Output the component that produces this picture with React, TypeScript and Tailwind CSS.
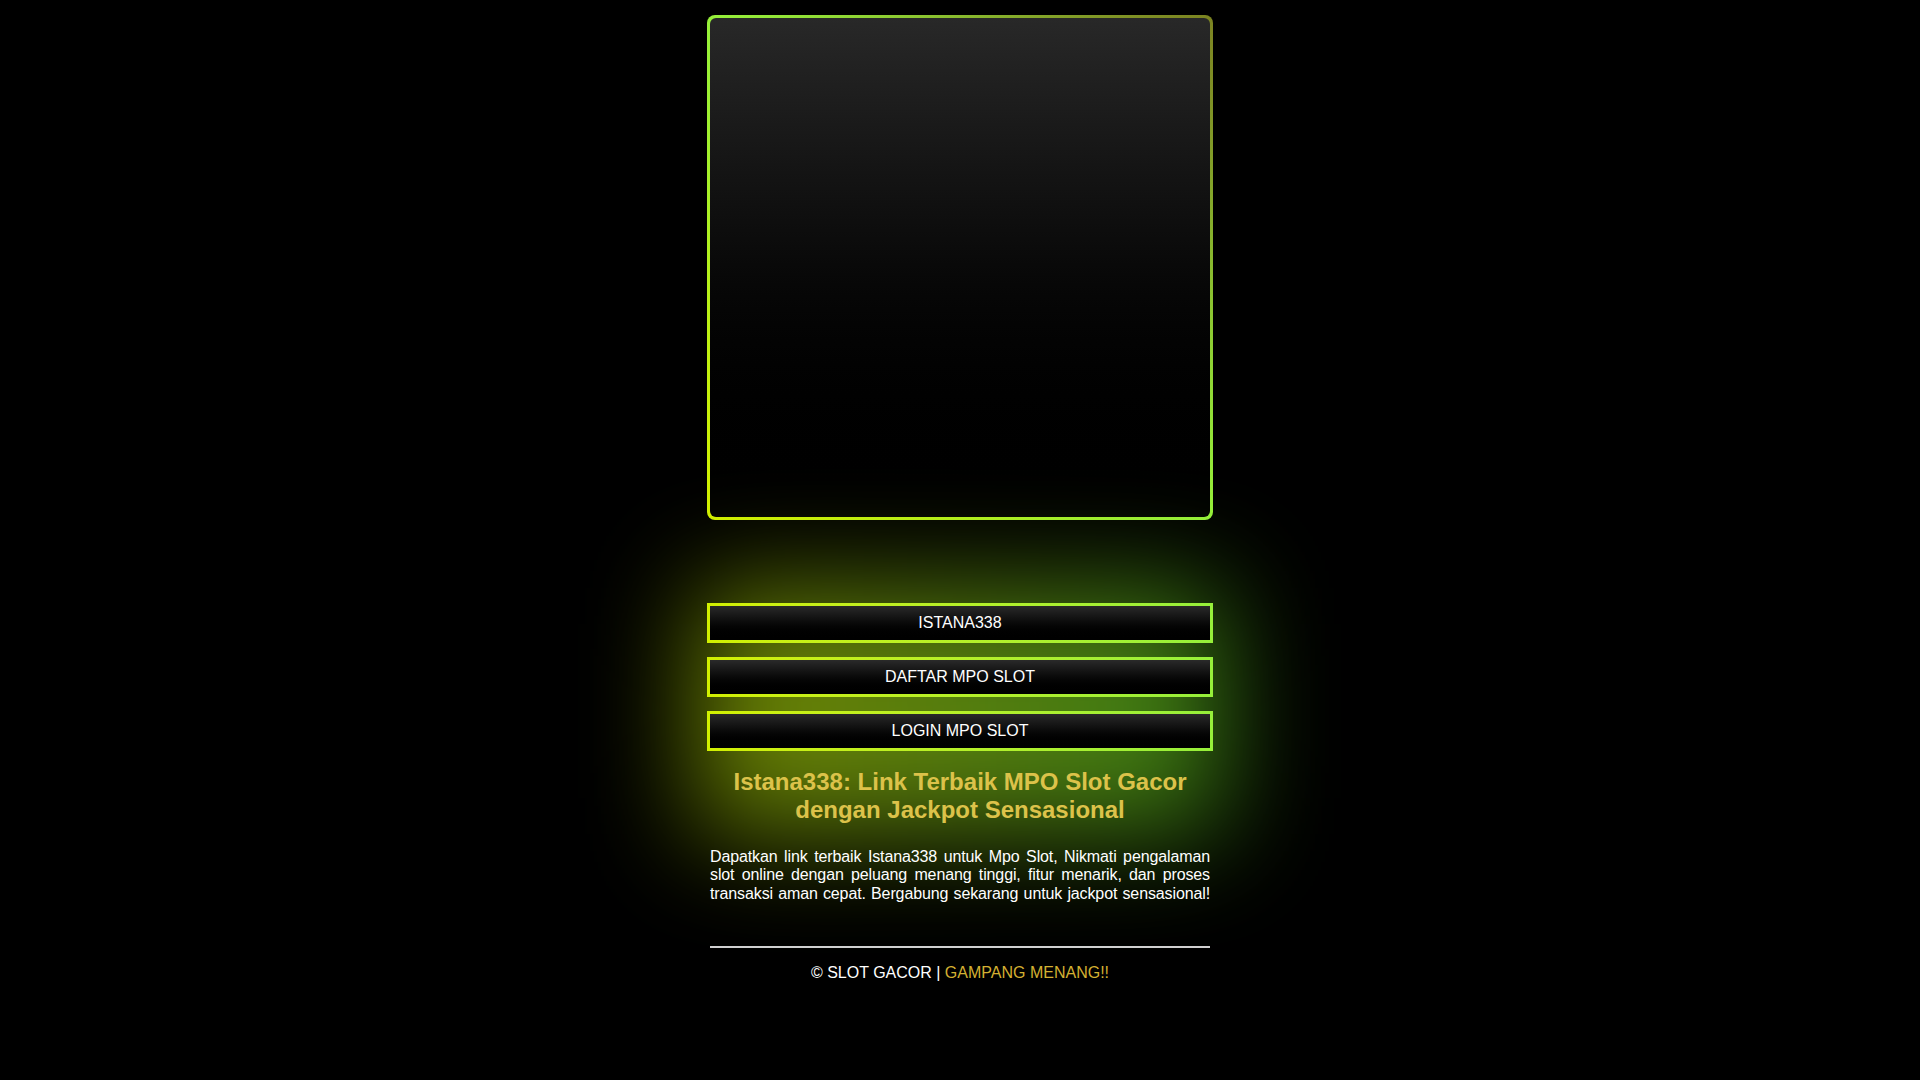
import React from "react";

const LINKS = ["ISTANA338", "DAFTAR MPO SLOT", "LOGIN MPO SLOT"];

// Neon bordered button
function NeonButton({ label }: { label: string }) {
  return (
    <a
      href="#"
      className="block p-[3px] bg-gradient-to-r from-[#d2f000] to-[#96f03a]"
    >
      <span className="flex h-[34px] items-center justify-center bg-gradient-to-b from-[#2a2a2a] to-black text-[16px] text-white">
        {label}
      </span>
    </a>
  );
}

export default function App() {
  return (
    <div
      className="min-h-screen bg-black text-white"
      style={{ fontFamily: '"Liberation Sans", Arial, sans-serif' }}
    >
      <div className="mx-auto w-[506px] pt-[15px] pb-10">
        {/* Banner frame */}
        <div className="h-[505px] rounded-lg p-[3px] bg-[conic-gradient(from_45deg,#7c8422,#96f03a_25%,#d2f000_50%,#96f03a_75%,#7c8422)]">
          <div className="h-full w-full rounded-[6px] bg-gradient-to-b from-[#282828] to-black" />
        </div>

        {/* Links with glow */}
        <div className="relative mt-[83px]">
          <div className="pointer-events-none absolute -left-[10px] -right-[10px] -top-[15px] -bottom-[10px] bg-gradient-to-r from-[#b8d800] to-[#5ccc22] opacity-60 blur-[55px]" />
          <div className="relative flex flex-col gap-[14px]">
            {LINKS.map((l) => (
              <NeonButton key={l} label={l} />
            ))}
          </div>
          <h1 className="relative mt-[17px] text-center text-[24px] font-bold leading-[28px] text-[#dcc24a]">
            Istana338: Link Terbaik MPO Slot Gacor dengan Jackpot Sensasional
          </h1>
        </div>

        <p className="relative mt-[24px] px-[3px] text-justify [text-align-last:justify] text-[16px] leading-[18.4px] tracking-[-0.12px] text-white">
          Dapatkan link terbaik Istana338 untuk Mpo Slot, Nikmati pengalaman
          slot online dengan peluang menang tinggi, fitur menarik, dan proses
          transaksi aman cepat. Bergabung sekarang untuk jackpot sensasional!
        </p>

        <div className="relative mx-[3px] mt-[43px] h-[2px] bg-[#d0d0d0]" />

        <p className="relative mt-[16px] text-center text-[16px] leading-[18.4px]">
          © SLOT GACOR | <span className="text-[#d4b032]">GAMPANG MENANG!!</span>
        </p>
      </div>
    </div>
  );
}
